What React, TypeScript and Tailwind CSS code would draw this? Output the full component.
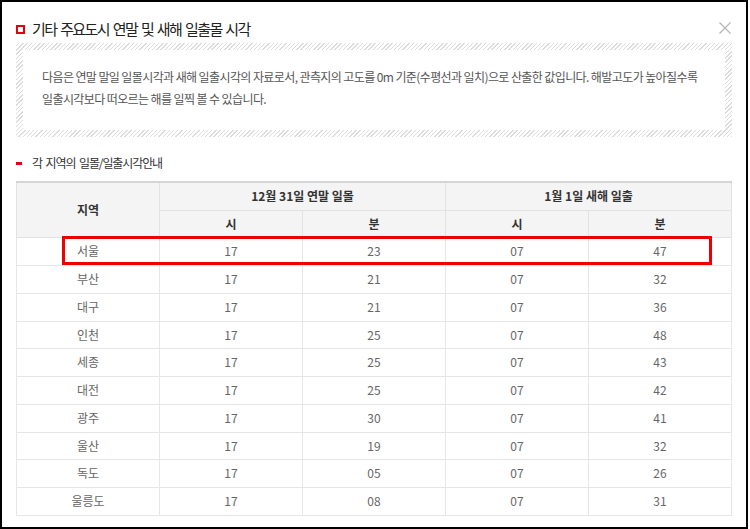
import React from "react";

const rows: [string, string, string, string, string][] = [
  ["서울", "17", "23", "07", "47"],
  ["부산", "17", "21", "07", "32"],
  ["대구", "17", "21", "07", "36"],
  ["인천", "17", "25", "07", "48"],
  ["세종", "17", "25", "07", "43"],
  ["대전", "17", "25", "07", "42"],
  ["광주", "17", "30", "07", "41"],
  ["울산", "17", "19", "07", "32"],
  ["독도", "17", "05", "07", "26"],
  ["울릉도", "17", "08", "07", "31"],
];

export default function App() {
  return (
    <div
      className="w-[748px] h-[529px] border-2 border-black bg-white relative overflow-hidden"
      style={{ fontFamily: '"Noto Sans CJK KR", "Noto Sans", sans-serif' }}
    >
      <div className="flex items-center h-[20px] mt-[17px] pl-[14px] pr-[14px]">
        <span className="w-[9px] h-[9px] border-2 border-[#e60012] bg-white mr-[7px]" />
        <h1 className="text-[15px] text-[#222] tracking-[-1.6px] [word-spacing:2px] leading-[20px] flex-1">
          기타 주요도시 연말 및 새해 일출몰 시각
        </h1>
        <svg width="12" height="12" viewBox="0 0 12 12" className="mr-[1px] -mt-[2px]">
          <path d="M0.5 0.5 L11.5 11.5 M11.5 0.5 L0.5 11.5" stroke="#b5b5b5" strokeWidth="1.2" />
        </svg>
      </div>

      <div className="mx-[14px] mt-[4px] p-[7px] bg-[repeating-linear-gradient(-45deg,#dcdcdc_0px,#dcdcdc_1px,#ffffff_1px,#ffffff_3px)]">
        <div className="bg-white h-[80px] px-[19px] pt-[16px] text-[12px] leading-[22px] text-[#555] tracking-[-0.6px]">
          다음은 연말 말일 일몰시각과 새해 일출시각의 자료로서, 관측지의 고도를 0m 기준(수평선과 일치)으로 산출한 값입니다. 해발고도가 높아질수록
          <br />
          일출시각보다 떠오르는 해를 일찍 볼 수 있습니다.
        </div>
      </div>

      <div className="flex items-center mt-[17px] pl-[14px] h-[18px]">
        <span className="w-[6px] h-[3px] bg-[#e60012] mr-[10px]" />
        <h2 className="text-[12px] text-[#333] tracking-[-1.1px] [word-spacing:2px]">각 지역의 일몰/일출시각안내</h2>
      </div>

      <div className="relative mx-[14px] mt-[9px]">
        <table className="w-[716px] table-fixed border-collapse text-[12px] text-center">
          <thead className="bg-[#f4f4f4] text-[#333] font-bold">
            <tr className="h-[28px]">
              <th rowSpan={2} className="border border-[#e2e2e2] border-t-[#d5d5d5] border-t-2 font-bold">지역</th>
              <th colSpan={2} className="border border-[#e2e2e2] border-t-[#d5d5d5] border-t-2 font-bold">12월 31일 연말 일몰</th>
              <th colSpan={2} className="border border-[#e2e2e2] border-t-[#d5d5d5] border-t-2 font-bold">1월 1일 새해 일출</th>
            </tr>
            <tr className="h-[27px]">
              <th className="border border-[#e2e2e2] font-bold">시</th>
              <th className="border border-[#e2e2e2] font-bold">분</th>
              <th className="border border-[#e2e2e2] font-bold">시</th>
              <th className="border border-[#e2e2e2] font-bold">분</th>
            </tr>
          </thead>
          <tbody className="text-[#666]">
            {rows.map((r, i) => (
              <tr key={i} className={i % 4 === 3 ? "h-[27px]" : "h-[28px]"}>
                {r.map((c, j) => (
                  <td key={j} className="border border-[#e6e6e6]">
                    {c}
                  </td>
                ))}
              </tr>
            ))}
          </tbody>
        </table>
        <div className="absolute left-[46px] top-[55px] w-[650px] h-[29px] border-[3px] border-[#ee0000] pointer-events-none" />
      </div>
    </div>
  );
}
